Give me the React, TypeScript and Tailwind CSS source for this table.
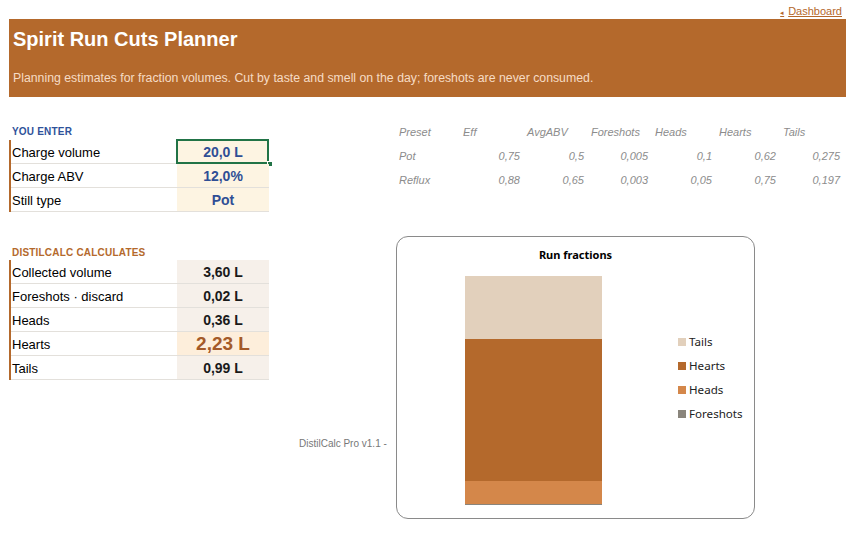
import React from 'react';

const enterRows = [
  { label: 'Charge volume', value: '20,0 L', selected: true },
  { label: 'Charge ABV', value: '12,0%' },
  { label: 'Still type', value: 'Pot' },
];

const calcRows = [
  { label: 'Collected volume', value: '3,60 L' },
  { label: 'Foreshots · discard', value: '0,02 L' },
  { label: 'Heads', value: '0,36 L' },
  { label: 'Hearts', value: '2,23 L', big: true },
  { label: 'Tails', value: '0,99 L' },
];

const presetHead = ['Preset', 'Eff', 'AvgABV', 'Foreshots', 'Heads', 'Hearts', 'Tails'];
const presets = [
  ['Pot', '0,75', '0,5', '0,005', '0,1', '0,62', '0,275'],
  ['Reflux', '0,88', '0,65', '0,003', '0,05', '0,75', '0,197'],
];

const legend = [
  { name: 'Tails', color: 'bg-[#e2d0bc]' },
  { name: 'Hearts', color: 'bg-[#b4692c]' },
  { name: 'Heads', color: 'bg-[#d4874a]' },
  { name: 'Foreshots', color: 'bg-[#8a857c]' },
];

export default function App() {
  return (
    <div className="relative w-[853px] h-[538px] bg-white overflow-hidden font-['Liberation_Sans',Arial,sans-serif]">
      {/* top link */}
      <div className="h-[19px] flex justify-end pr-[11px] pt-[5px]">
        <a className="text-[11px] leading-[13px] text-[#b4692c] underline">
          <span className="text-[7px] align-middle mr-[4px]">◂</span>Dashboard
        </a>
      </div>

      {/* banner */}
      <div className="ml-[9px] w-[837px] h-[78px] bg-[#b4692c] px-[4px] pt-[9px]">
        <h1 className="text-[20px] leading-[23px] font-bold text-white">Spirit Run Cuts Planner</h1>
        <p className="mt-[20px] text-[12.3px] leading-[14px] text-[#f6dcc5]">
          Planning estimates for fraction volumes. Cut by taste and smell on the day; foreshots are never consumed.
        </p>
      </div>

      <div className="flex">
        {/* left column */}
        <div className="ml-[9px] w-[260px]">
          <div className="mt-[28px] h-[15px] pl-[3px] text-[10px] leading-[14px] font-bold text-[#2f529a] tracking-[0.2px]">
            YOU ENTER
          </div>
          <div className="border-l-2 border-[#b4692c]">
            {enterRows.map((r) => (
              <div key={r.label} className="flex h-[24px] border-b border-[#e3e0db]">
                <div className="w-[166px] pl-[1px] pt-px text-[13px] leading-[23px] text-black">{r.label}</div>
                <div className="relative flex-1 bg-[#fdf4e2] pt-px text-center text-[14px] leading-[23px] font-bold text-[#2f4e95]">
                  {r.value}
                  {r.selected && (
                    <>
                      <div className="absolute -left-px -top-px w-[93px] h-[25px] border-2 border-[#217346]" />
                      <div className="absolute right-[-4px] bottom-[-4px] w-[6px] h-[6px] bg-[#217346] border border-white" />
                    </>
                  )}
                </div>
              </div>
            ))}
          </div>

          <div className="mt-[34px] h-[14px] pl-[3px] text-[10px] leading-[14px] font-bold text-[#b4692c] tracking-[0.2px]">
            DISTILCALC CALCULATES
          </div>
          <div className="border-l-2 border-[#b4692c]">
            {calcRows.map((r) => (
              <div key={r.label} className="flex h-[24px] border-b border-[#e3e0db]">
                <div className="w-[166px] pl-[1px] pt-px text-[13px] leading-[23px] text-black">{r.label}</div>
                {r.big ? (
                  <div className="flex-1 bg-[#fdeedb] text-center text-[19px] leading-[24px] font-bold text-[#a45a28]">
                    {r.value}
                  </div>
                ) : (
                  <div className="flex-1 bg-[#f6f0ea] pt-px text-center text-[14px] leading-[23px] font-bold text-[#1a1a1a]">
                    {r.value}
                  </div>
                )}
              </div>
            ))}
          </div>
        </div>

        {/* right column */}
        <div className="ml-[128px]">
          <div className="mt-[23px] text-[11px] italic text-[#8c8c8c]">
            <div className="flex h-[24px] items-center">
              {presetHead.map((h) => (
                <div key={h} className="w-[64px] pl-[2px]">{h}</div>
              ))}
            </div>
            {presets.map((row) => (
              <div key={row[0]} className="flex h-[24px] items-center">
                {row.map((c, i) => (
                  <div key={i} className={i === 0 ? 'w-[64px] pl-[2px]' : 'w-[64px] text-right pr-[5px]'}>
                    {c}
                  </div>
                ))}
              </div>
            ))}
          </div>

          {/* chart */}
          <div className="relative ml-[-1px] mt-[44px] w-[359px] h-[283px] rounded-[12px] border border-[#8a8a8a] bg-white font-['Noto_Sans',sans-serif]">
            <div className="pt-[10px] text-center text-[11px] leading-[16px] font-bold text-black">Run fractions</div>
            <div className="flex">
              <div className="ml-[68px] mt-[13px] w-[137px] flex flex-col">
                <div className="h-[63px] bg-[#e2d0bc]" />
                <div className="h-[142px] bg-[#b4692c]" />
                <div className="h-[23px] bg-[#d4874a]" />
                <div className="h-px bg-[#8a857c]" />
              </div>
              <div className="ml-[76px] mt-[67px] flex flex-col">
                {legend.map((l) => (
                  <div key={l.name} className="flex items-center h-[24px] text-[11.6px] text-[#222]">
                    <span className={`w-[8px] h-[8px] mr-[3px] ${l.color}`} />
                    {l.name}
                  </div>
                ))}
              </div>
            </div>
          </div>
        </div>
      </div>

      <div className="absolute left-[299px] top-[437px] text-[10px] leading-[14px] text-[#777]">DistilCalc Pro v1.1 -</div>
    </div>
  );
}
